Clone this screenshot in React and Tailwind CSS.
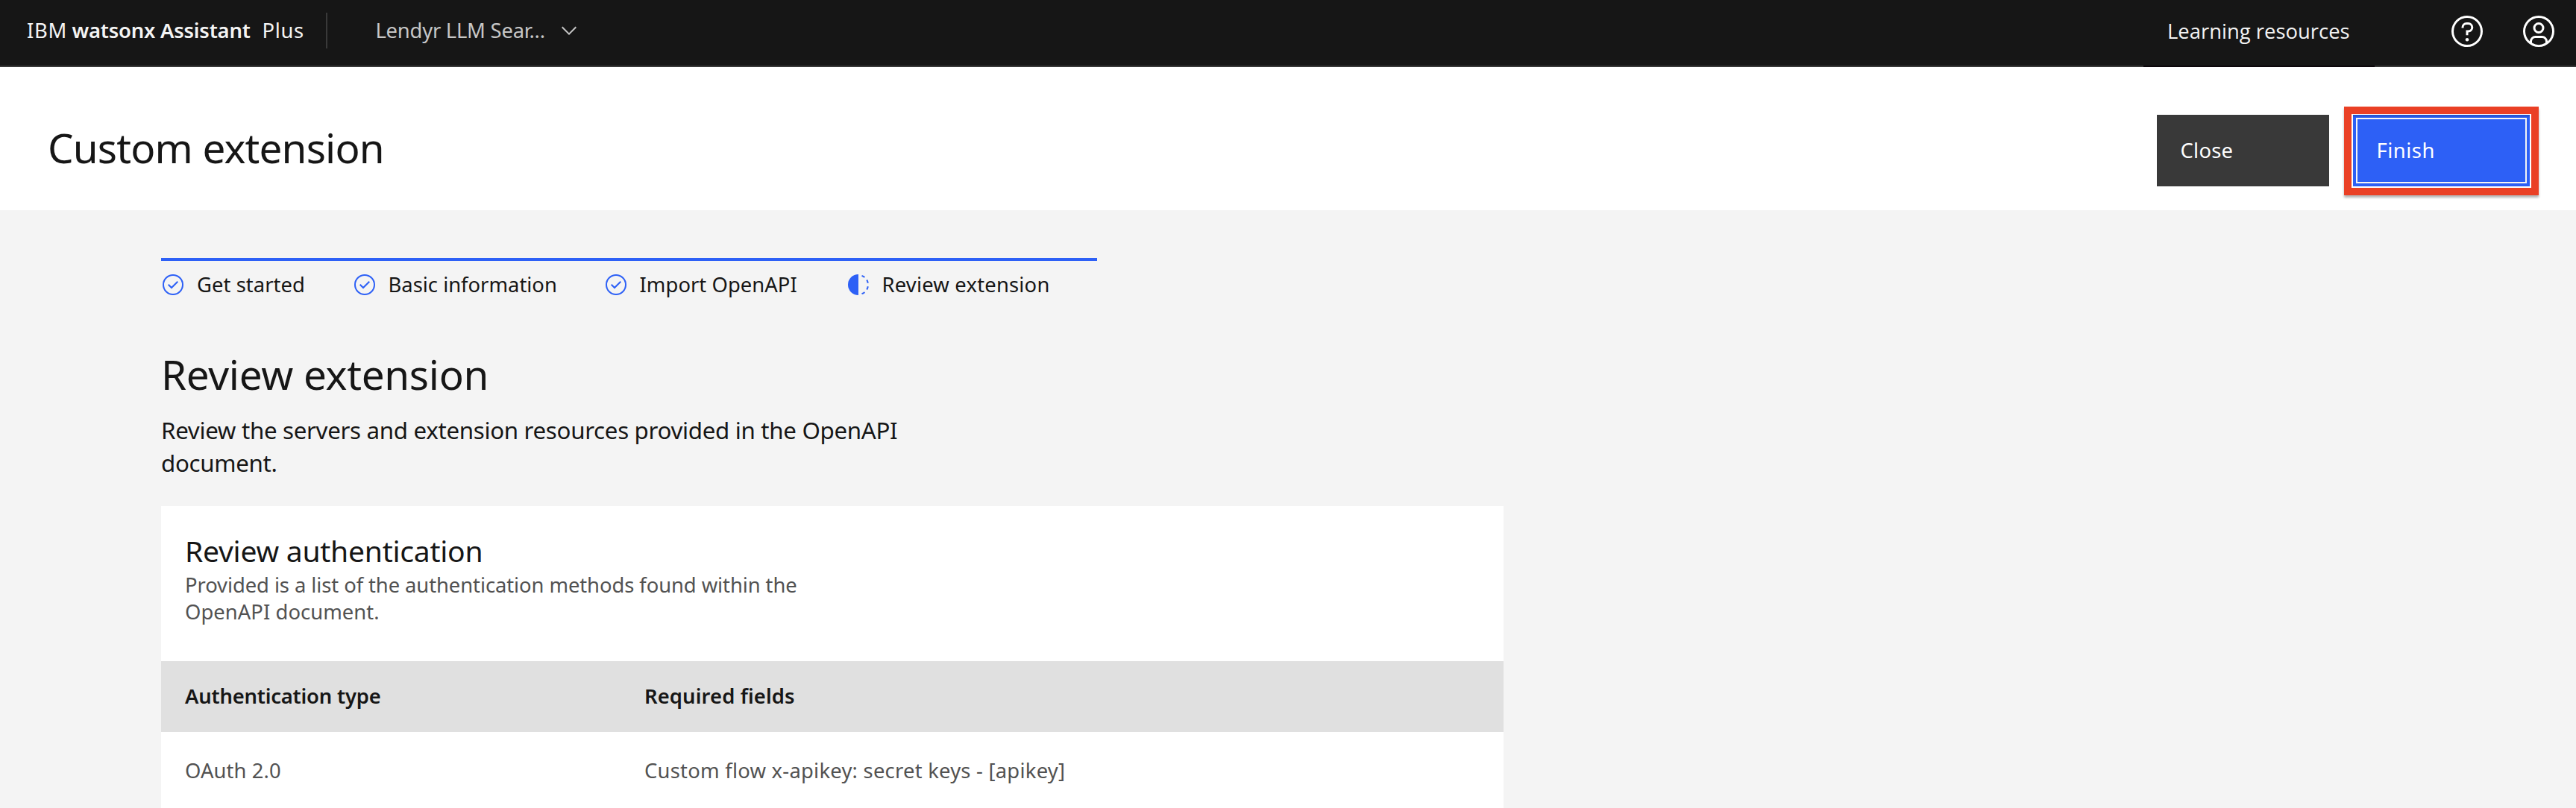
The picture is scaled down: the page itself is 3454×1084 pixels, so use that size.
import React from "react";

const RING =
  "M16,2A14,14,0,1,0,30,16,14,14,0,0,0,16,2Zm0,26A12,12,0,1,1,28,16,12,12,0,0,1,16,28Z";

function ChevronDown() {
  return (
    <svg viewBox="0 0 16 16" className="h-8 w-8 fill-[#c6c6c6]">
      <path d="M8 11 3 6 3.7 5.3 8 9.6 12.3 5.3 13 6z" />
    </svg>
  );
}

function Help() {
  return (
    <svg viewBox="0 0 32 32" className="h-12 w-12 fill-white">
      <path d={RING} />
      <circle cx="16" cy="23.5" r="1.5" />
      <path d="M17,8H15.5A4.49,4.49,0,0,0,11,12.5V13h2v-.5A2.5,2.5,0,0,1,15.5,10H17a2.5,2.5,0,0,1,0,5H15v4.5h2V17a4.5,4.5,0,0,0,0-9Z" />
    </svg>
  );
}

function UserAvatar() {
  return (
    <svg viewBox="0 0 32 32" className="h-12 w-12 fill-white">
      <path d="M16,8a5,5,0,1,0,5,5A5,5,0,0,0,16,8Zm0,8a3,3,0,1,1,3-3A3.0034,3.0034,0,0,1,16,16Z" />
      <path d="M16,2A14,14,0,1,0,30,16,14.0158,14.0158,0,0,0,16,2ZM10,26.3765V25a3.0033,3.0033,0,0,1,3-3h6a3.0033,3.0033,0,0,1,3,3v1.3765a11.8989,11.8989,0,0,1-12,0Zm13.9925-1.4507A5.0016,5.0016,0,0,0,19,20H13a5.0016,5.0016,0,0,0-4.9925,4.9258,12,12,0,1,1,15.985,0Z" />
    </svg>
  );
}

function StepIcon({ done }) {
  return (
    <svg viewBox="0 0 32 32" className="h-8 w-8 shrink-0 fill-[#2d60f6]">
      {done ? (
        <>
          <path d={RING} />
          <path d="M14 21.414 9 16.413 10.413 15 14 18.586 21.585 11 23 12.415 14 21.414z" />
        </>
      ) : (
        <>
          <path d="M23.7642 6.8593l1.2851-1.5315A13.976 13.976 0 0020.8672 2.887l-.6836 1.8776A11.9729 11.9729 0 0123.7642 6.8593z" />
          <path d="M27.81 14l1.9677-.4128A13.8888 13.8888 0 0028.14 9.0457L26.4087 10A12.52 12.52 0 0127.81 14z" />
          <path d="M20.1836 27.2354l.6836 1.8776a13.976 13.976 0 004.1821-2.4408l-1.2851-1.5315A11.9729 11.9729 0 0120.1836 27.2354z" />
          <path d="M26.4087 22L28.14 23a14.14 14.14 0 001.6382-4.5872L27.81 18.0659A12.1519 12.1519 0 0126.4087 22z" />
          <path d="M16 30V2a14 14 0 000 28z" />
        </>
      )}
    </svg>
  );
}

const STEPS = [
  { label: "Get started", done: true, spacing: "tracking-[0.06px]" },
  { label: "Basic information", done: true, spacing: "tracking-[0px]" },
  { label: "Import OpenAPI", done: true, spacing: "tracking-[0.05px]" },
  { label: "Review extension", done: false, spacing: "tracking-[0.2px]" },
];

function Header() {
  return (
    <header className="flex h-[90px] items-start bg-[#161616] text-[#f4f4f4]">
      <div className="flex h-full flex-1 items-start border-b-2 border-[#393939] pl-[36px] pt-[23px]">
        <span className="w-[60.5px] tracking-[0.71px]">IBM</span>
        <span className="w-[255px] font-semibold tracking-[-0.21px]">watsonx Assistant</span>
        <span className="w-[85.5px] tracking-[0.68px]">Plus</span>
        <div className="-mt-1.5 h-12 w-0.5 bg-[#393939]" />
        <button className="ml-[64.5px] flex items-start text-[#c6c6c6]">
          <span className="w-[243.5px] text-left tracking-[-0.23px]">Lendyr LLM Sear...</span>
          <span className="mt-0.5">
            <ChevronDown />
          </span>
        </button>
      </div>
      <button className="flex h-full w-[310px] items-start border-b-2 border-[#0c060b] pl-8 pt-6 font-['Open_Sans',sans-serif] tracking-[0.02px]">
        Learning resources
      </button>
      <div className="flex h-full w-[270px] items-start gap-12 border-b-2 border-[#393939] pl-[100px] pt-[18px]">
        <Help />
        <UserAvatar />
      </div>
    </header>
  );
}

function TitleBar() {
  return (
    <div className="flex h-48 items-start justify-between bg-white pl-[64px] pr-[50px]">
      <h1 className="pt-[72px] text-[54.8px] leading-[72px] tracking-[-0.82px]">Custom extension</h1>
      <div className="flex items-start gap-5 pt-[53px]">
        <button className="mt-[11px] flex h-24 w-[231px] items-start bg-[#393939] pl-[31.5px] pt-[30px] tracking-[0.26px] text-white">
          Close
        </button>
        <div className="h-[119px] w-[261px] border-10 border-[#ea4025] bg-white px-0.5 pb-0.5 pt-px shadow-[0_3px_3px_rgba(0,0,0,0.3)]">
          <button className="flex h-24 w-full bg-[#2d60f6] bg-linear-to-b from-[#204fc4] to-[#2d60f6] to-[4px] p-1">
            <span className="flex h-full w-full items-start border-2 border-[#f4f4f4] bg-[#2d60f6] pl-[25.5px] pt-6 tracking-[0.52px] text-white">
              Finish
            </span>
          </button>
        </div>
      </div>
    </div>
  );
}

function Progress() {
  return (
    <ul className="grid w-[1255px] grid-cols-[256.5px_337px_325px_1fr] border-t-4 border-[#2d60f6] pt-3.5">
      {STEPS.map((s) => (
        <li key={s.label} className="flex items-center gap-4">
          <StepIcon done={s.done} />
          <span className={s.spacing}>{s.label}</span>
        </li>
      ))}
    </ul>
  );
}

function AuthCard() {
  return (
    <section className="h-[405px] w-[1800px] bg-white">
      <div className="h-52 pl-8 pt-[35px]">
        <h3 className="text-[39.1px] leading-[50px] tracking-[-0.27px]">Review authentication</h3>
        <p className="mt-[3px] tracking-[-0.08px] text-[#525252]">
          Provided is a list of the authentication methods found within the
          <br />
          <span className="tracking-[0.05px]">OpenAPI document.</span>
        </p>
      </div>
      <div className="grid h-[95px] grid-cols-[648px_1fr] items-center bg-[#e0e0e0] pb-0.5 font-semibold">
        <span className="pl-8 tracking-[-0.2px]">Authentication type</span>
        <span className="tracking-[0.11px]">Required fields</span>
      </div>
      <div className="grid grid-cols-[648px_1fr] pt-[34px] text-[#525252]">
        <span className="pl-8 tracking-[0.1px]">OAuth 2.0</span>
        <span className="tracking-[0.24px]">Custom flow x-apikey: secret keys - [apikey]</span>
      </div>
    </section>
  );
}

export default function App() {
  return (
    <div className="h-[1084px] w-[3454px] overflow-hidden whitespace-nowrap bg-[#f4f4f4] font-['Noto_Sans',sans-serif] text-[27.4px] leading-9 text-[#161616]">
      <Header />
      <TitleBar />
      <main className="pl-[216px] pt-16">
        <Progress />
        <h2 className="mt-[66px] text-[54.8px] leading-[72px] tracking-[-0.29px]">Review extension</h2>
        <p className="mb-9 mt-[17px] text-[31.3px] leading-[44px] tracking-[-0.33px]">
          Review the servers and extension resources provided in the OpenAPI
          <br />
          document.
        </p>
        <AuthCard />
      </main>
    </div>
  );
}
